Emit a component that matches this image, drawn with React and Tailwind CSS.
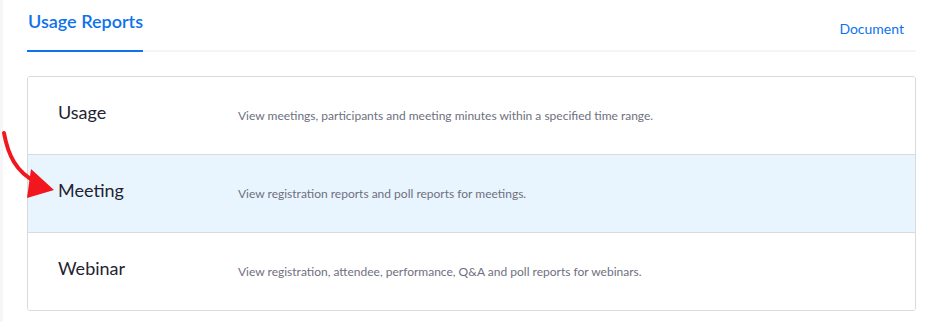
import React from "react";

const rows = [
  { title: "Usage", desc: "View meetings, participants and meeting minutes within a specified time range.", active: false },
  { title: "Meeting", desc: "View registration reports and poll reports for meetings.", active: true },
  { title: "Webinar", desc: "View registration, attendee, performance, Q&A and poll reports for webinars.", active: false },
];

export default function App() {
  return (
    <div className="relative flex h-[322px] w-[926px] overflow-hidden bg-white font-['Lato','Noto_Sans',sans-serif]">
      <div className="w-[3px] shrink-0 bg-[#f6f6f9]" />
      <div className="flex flex-1 flex-col pl-[24px] pr-[10px]">
        <div className="flex h-[52px]">
          <div className="flex h-[52px] items-start border-b-2 border-[#0e72ed] pl-[1px] pt-[9px]">
            <span className="text-[18px] font-semibold leading-[24px] text-[#0e72ed]">Usage Reports</span>
          </div>
          <div className="flex h-[52px] flex-1 items-start justify-end border-b-2 border-[#f5f5f6] pr-[12px] pt-[20px]">
            <span className="text-[14px] leading-[18px] text-[#0e72ed]">Document</span>
          </div>
        </div>
        <div className="mt-[24px] overflow-hidden rounded-[3px] border border-[#dadada]">
          {rows.map((r, i) => (
            <div
              key={r.title}
              className={
                "flex items-center pl-[30px] " +
                (i > 0 ? "h-[78px] border-t border-[#dadada] " : "h-[77px] ") +
                (r.active ? "bg-[#e9f5fe]" : "bg-white")
              }
            >
              <div className="mb-[7px] w-[180px] text-[18px] leading-[24px] text-[#232333]">{r.title}</div>
              <div className="text-[12px] leading-[16px] text-[#6e7080]">{r.desc}</div>
            </div>
          ))}
        </div>
      </div>
      <svg className="pointer-events-none absolute left-0 top-0" width="80" height="220" viewBox="0 0 80 220">
        <path d="M4 133 C 8 155, 16 172, 36 182" fill="none" stroke="#f2161e" strokeWidth="4" strokeLinecap="round" />
        <polygon points="54,190 31,169 27,198" fill="#f2161e" />
      </svg>
    </div>
  );
}
